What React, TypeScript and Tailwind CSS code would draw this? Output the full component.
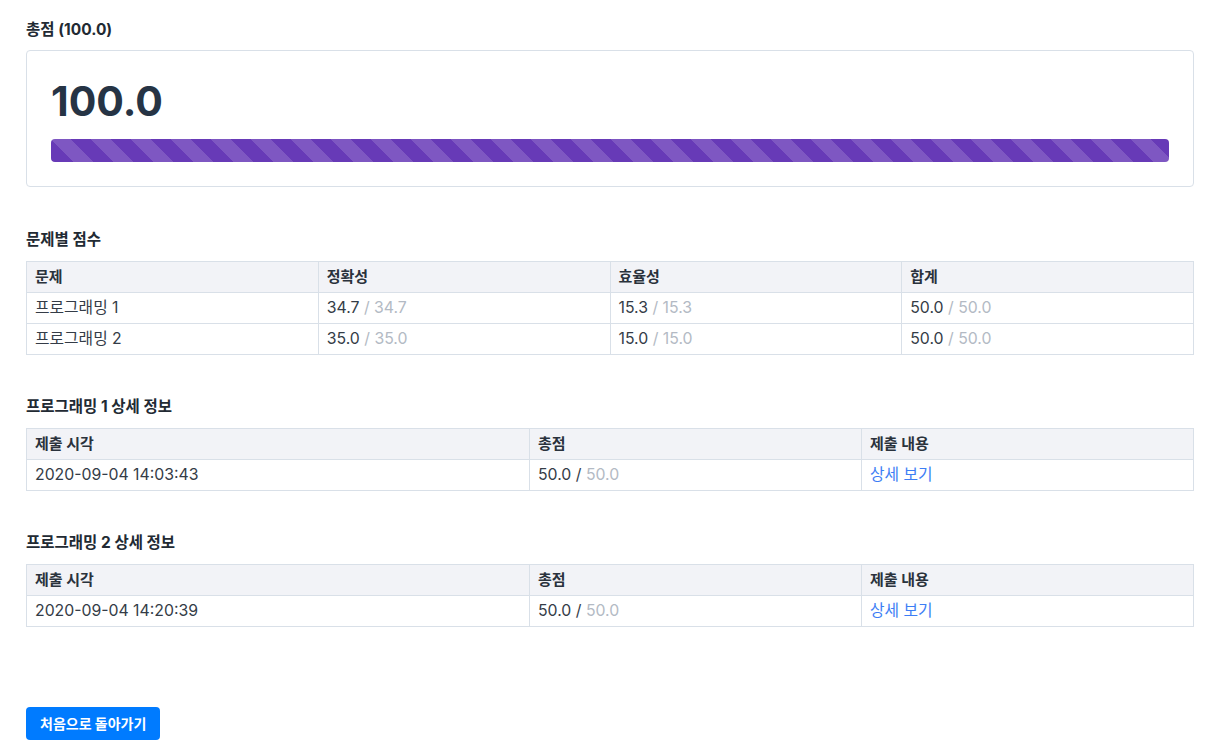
import React from "react";

const font = "font-['Inter','Noto_Sans_CJK_KR',sans-serif]";

function Score({ v, max, slashGrey = true }: { v: string; max: string; slashGrey?: boolean }) {
  return (
    <span>
      {v}
      {slashGrey ? (
        <span className="text-[#b3bac4]"> / {max}</span>
      ) : (
        <>
          {" / "}
          <span className="text-[#b3bac4]">{max}</span>
        </>
      )}
    </span>
  );
}

const th = "border border-[#d9e0e8] px-2 h-[31px] text-left font-bold text-[15px] text-[#2a323c] bg-[#f2f3f7]";
const td = "border border-[#d9e0e8] px-2 h-[31px] text-[15.8px] text-[#343c47]";
const h3 = "text-[15.5px] font-bold text-[#222a33] leading-5 mb-[11px]";

function Detail({ title, time }: { title: string; time: string }) {
  return (
    <section>
      <h3 className={h3}>{title}</h3>
      <table className="w-full border-collapse">
        <thead>
          <tr>
            <th className={th + " w-[503px]"}>제출 시각</th>
            <th className={th + " w-[332px]"}>총점</th>
            <th className={th}>제출 내용</th>
          </tr>
        </thead>
        <tbody>
          <tr>
            <td className={td}>{time}</td>
            <td className={td}>
              <Score v="50.0" max="50.0" slashGrey={false} />
            </td>
            <td className={td}>
              <a className="text-[#3d7ef5] cursor-pointer">상세 보기</a>
            </td>
          </tr>
        </tbody>
      </table>
    </section>
  );
}

export default function App() {
  return (
    <div className={`${font} bg-white min-h-[751px] pl-[26px] pt-[20px] pb-[11px]`}>
      <div className="w-[1168px]">
        <h3 className="text-[15.5px] font-bold text-[#222a33] leading-5 mb-[10px]">총점 (100.0)</h3>
        <div className="border border-[#d9e0e8] rounded-[4px] px-6 pt-[26px] pb-[24px]">
          <div className="text-[41px] leading-[48px] font-bold text-[#263445]">100.0</div>
          <div className="mt-[14px] h-[23px] rounded-[4px] bg-[#673ab7] bg-[linear-gradient(45deg,rgba(255,255,255,.15)_25%,transparent_25%,transparent_50%,rgba(255,255,255,.15)_50%,rgba(255,255,255,.15)_75%,transparent_75%,transparent)] bg-[length:40px_40px]" />
        </div>

        <section className="mt-[43px]">
          <h3 className={h3}>문제별 점수</h3>
          <table className="w-full border-collapse table-fixed">
            <thead>
              <tr>
                <th className={th}>문제</th>
                <th className={th}>정확성</th>
                <th className={th}>효율성</th>
                <th className={th}>합계</th>
              </tr>
            </thead>
            <tbody>
              <tr>
                <td className={td}>프로그래밍 1</td>
                <td className={td}><Score v="34.7" max="34.7" /></td>
                <td className={td}><Score v="15.3" max="15.3" /></td>
                <td className={td}><Score v="50.0" max="50.0" /></td>
              </tr>
              <tr>
                <td className={td}>프로그래밍 2</td>
                <td className={td}><Score v="35.0" max="35.0" /></td>
                <td className={td}><Score v="15.0" max="15.0" /></td>
                <td className={td}><Score v="50.0" max="50.0" /></td>
              </tr>
            </tbody>
          </table>
        </section>

        <div className="mt-[42px]">
          <Detail title="프로그래밍 1 상세 정보" time="2020-09-04 14:03:43" />
        </div>
        <div className="mt-[42px]">
          <Detail title="프로그래밍 2 상세 정보" time="2020-09-04 14:20:39" />
        </div>

        <button className="mt-[80px] h-[33px] px-[14px] rounded-[4px] bg-[#007bff] text-white text-[14px] font-bold">
          처음으로 돌아가기
        </button>
      </div>
    </div>
  );
}
